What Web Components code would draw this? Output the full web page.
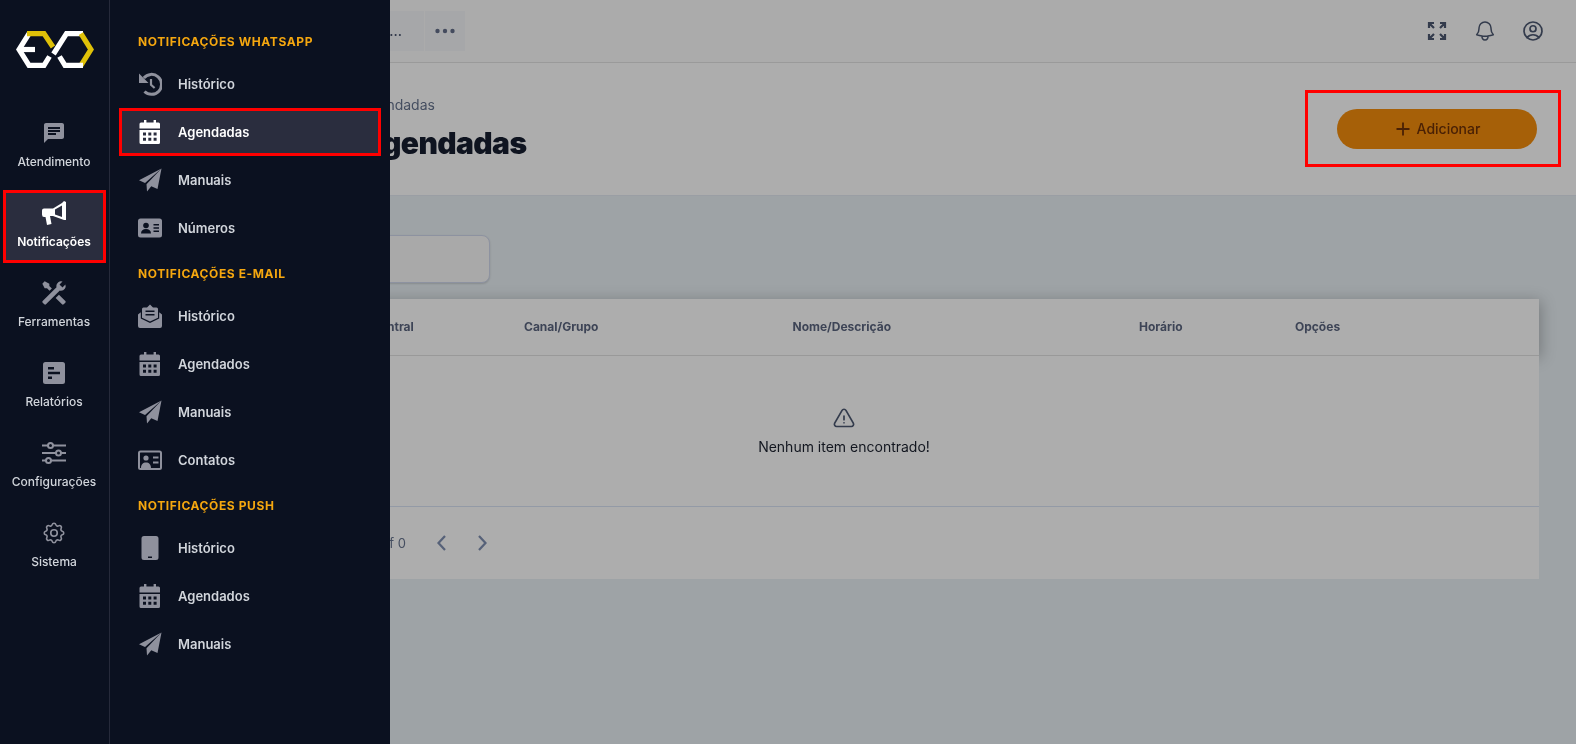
<!DOCTYPE html>
<html lang="pt-BR">
<head>
<meta charset="utf-8">
<title>Agendadas</title>
<style>
  html, body { margin: 0; height: 100%; background: #9ea3a6; font-family: Inter, "Noto Sans", sans-serif; overflow: hidden; }
</style>
</head>
<body>
<app-shell>
  <side-drawer slot="drawer"></side-drawer>
  <top-bar></top-bar>
  <page-header crumb="Agendadas" heading="Agendadas"></page-header>
  <schedule-table></schedule-table>
</app-shell>

<script>
// icones inline, todos em viewBox 24
const BG = '#0b1120';
const ICONS = {
  chat: '<path fill="currentColor" d="M20 2H4c-1.1 0-1.99.9-1.99 2L2 22l4-4h14c1.1 0 2-.9 2-2V4c0-1.1-.9-2-2-2zM6 9h12v2H6V9zm8 5H6v-2h8v2zm4-6H6V6h12v2z"/>',
  bullhorn: '<path fill="currentColor" fill-rule="evenodd" d="M0 9.500Q0 7.500 2 7.500H11L20 2 22 0 24 1V19L22 19 11 15H8L9.500 23 5 24 3.500 16H2Q0 16 0 13.500zM13 8.500V13.500L20 16V4.500z"/>',
  tools: '<g transform="matrix(-1 0 0 1 24 0)"><path fill="currentColor" d="M21.71 20.29L20.29 21.71A1 1 0 0 1 18.88 21.71L7 9.85A3.81 3.81 0 0 1 6 10A4 4 0 0 1 2.22 4.7L4.76 7.24L5.29 6.71L6.71 5.29L7.24 4.76L4.7 2.22A4 4 0 0 1 10 6A3.81 3.81 0 0 1 9.85 7L21.71 18.88A1 1 0 0 1 21.71 20.29M2.29 18.88A1 1 0 0 0 2.29 20.29L3.71 21.71A1 1 0 0 0 5.12 21.71L10.59 16.25L7.76 13.41M20 2L16 4V6L13.83 8.17L15.83 10.17L18 8H20L22 4Z"/></g>',
  report: '<path fill="currentColor" fill-rule="evenodd" d="M3.5 1h17A2.5 2.5 0 0 1 23 3.500v17a2.500 2.500 0 0 1-2.500 2.500h-17A2.500 2.500 0 0 1 1 20.500v-17A2.500 2.500 0 0 1 3.500 1zM6 6v2.400h6V6zM6 10.800v2.400h12v-2.400zM6 15.600V18h4v-2.400z"/>',
  sliders: '<g fill="none" stroke="currentColor" stroke-width="2"><path d="M0 4.500h6M11 4.500h13M0 12h14M19 12h5M0 19.500h4M9 19.500h15"/><circle cx="8.500" cy="4.500" r="2.500"/><circle cx="16.500" cy="12" r="2.500"/><circle cx="6.500" cy="19.500" r="2.500"/></g>',
  gear: '<g fill="none" stroke="currentColor" stroke-width="1.500"><path d="M10.325 4.317c.426-1.756 2.924-1.756 3.350 0a1.724 1.724 0 002.573 1.066c1.543-.94 3.310.826 2.370 2.370a1.724 1.724 0 001.065 2.572c1.756.426 1.756 2.924 0 3.350a1.724 1.724 0 00-1.066 2.573c.94 1.543-.826 3.310-2.370 2.370a1.724 1.724 0 00-2.572 1.065c-.426 1.756-2.924 1.756-3.350 0a1.724 1.724 0 00-2.573-1.066c-1.543.94-3.310-.826-2.370-2.370a1.724 1.724 0 00-1.065-2.572c-1.756-.426-1.756-2.924 0-3.350a1.724 1.724 0 001.066-2.573c-.94-1.543.826-3.310 2.370-2.370.996.608 2.296.07 2.572-1.065z"/><circle cx="12" cy="12" r="3"/></g>',
  history: '<path fill="none" stroke="currentColor" stroke-width="3" d="M5.800 6A10 10 0 1 1 6.500 19.500"/><path fill="currentColor" d="M1 1.500V11h9.500z"/><path fill="none" stroke="currentColor" stroke-width="2.200" d="M13 7v5.800l3.600 3.200"/>',
  calendar: '<path fill="currentColor" fill-rule="evenodd" d="M6 0h2.400v2.500h7.200V0H18v2.500h2.500A1.500 1.500 0 0 1 22 4v4.600H1.500V4A1.500 1.500 0 0 1 3 2.500H6zM1.500 10H22v12.500a1.500 1.500 0 0 1-1.500 1.500H3a1.500 1.500 0 0 1-1.500-1.500zM5 12.500v3h3v-3zM10.300 12.500v3h3v-3zM15.600 12.500v3h3v-3zM5 17.800v3h3v-3zM10.300 17.800v3h3v-3zM15.600 17.800v3h3v-3z"/>',
  plane: '<path fill="currentColor" d="M23.500 .5 1 12.300 7 15zM23.500 .5 8.500 16.300 9 23.500 13.300 18.300 19.500 21z"/>',
  idcard: '<rect x="0" y="2.500" width="24" height="19" rx="2.500" fill="currentColor"/><circle cx="8" cy="9.500" r="2.800" fill="' + BG + '"/><path fill="' + BG + '" d="M3 17.500c0-3 2-4.500 5-4.500s5 1.500 5 4.500zM15.500 8h5.500v1.500h-5.500zM15.500 11.300h5.500v1.500h-5.500zM15.500 14.600h5.500v1.500h-5.500z"/>',
  mailopen: '<path fill="currentColor" fill-rule="evenodd" d="M9 3.500 12 .5 15 3.500h3.500A1.500 1.500 0 0 1 20 5v8.800L12 17.500 4 13.800V5a1.500 1.500 0 0 1 1.500-1.500zM7.500 6.500V8h9V6.500zM7.500 10v1.500h9V10z"/><path fill="currentColor" d="M0 10.500 2.800 8.200V14.500L12 19 21.200 14.500V8.200L24 10.500V22a2 2 0 0 1-2 2H2a2 2 0 0 1-2-2z"/>',
  contact: '<rect x="1" y="3.500" width="22" height="17.500" rx="1.500" fill="none" stroke="currentColor" stroke-width="2"/><circle cx="8" cy="10" r="2.600" fill="currentColor"/><path fill="currentColor" d="M3 20c0-3.500 2-5.500 5-5.500s5 2 5 5.500zM15 8.500h5.500v2H15zM15 13.500h5.500v2H15z"/>',
  phone: '<path fill="currentColor" fill-rule="evenodd" d="M6 0h12A2.500 2.500 0 0 1 20.500 2.500v19a2.500 2.500 0 0 1-2.500 2.500H6A2.500 2.500 0 0 1 3.500 21.500v-19A2.500 2.500 0 0 1 6 0zM10 20.500V22h4v-1.500z"/>'
};

const HERO = (d, w = 1.5) => `<path fill="none" stroke="currentColor" stroke-width="${w}" stroke-linecap="round" stroke-linejoin="round" d="${d}"/>`;
// alguns icones tem desenho menor que a caixa, entao escala um pouco
const RAIL_SIZE = { gear: 26, tools: 28 };

function svg(name, size = 24) {
  return `<svg width="${size}" height="${size}" viewBox="0 0 24 24" aria-hidden="true">${ICONS[name]}</svg>`;
}

class AppShell extends HTMLElement {
  constructor() {
    super();
    this.attachShadow({ mode: 'open' });
    this.shadowRoot.innerHTML = `
      <style>
        :host { display: block; height: 744px; padding-left: 312px; box-sizing: border-box; background: #9ea3a6; overflow: hidden; }
        .drawer { position: fixed; left: 0; top: 0; bottom: 0; z-index: 10; will-change: transform; }
        .main { will-change: transform; }
      </style>
      <div class="drawer"><slot name="drawer"></slot></div>
      <div class="main"><slot></slot></div>`;
  }
}

class SideDrawer extends HTMLElement {
  constructor() {
    super();
    this.attachShadow({ mode: 'open' });
    this.shadowRoot.innerHTML = `
      <style>
        :host { display: flex; height: 744px; background: ${BG}; }
        .rail { width: 109px; border-right: 1px solid #262a3a; display: flex; flex-direction: column; align-items: center; position: relative; box-sizing: content-box; }
        .logo { margin-top: 31px; margin-bottom: 45px; height: 37px; width: 78px; display: block; }
        .panel { width: 280px; box-sizing: border-box; padding: 0 12px; }
      </style>
      <div class="rail">
        <svg class="logo" viewBox="15 31 78 37" fill="none" stroke-width="5.200" stroke-linejoin="miter">
          <path stroke="#fff" d="M28 33.600 18 49.500 28 65.400H43L48.500 56.500"/>
          <path stroke="#fff" d="M18 49.500H34"/>
          <path stroke="#dfc108" d="M26 33.600H43L52 47"/>
          <path stroke="#fff" d="M52.500 54 65.500 33.600H82"/>
          <path stroke="#dfc108" d="M80 33.600 90 49.500 80 65.400"/>
          <path stroke="#fff" d="M58.500 56.500 64 65.400H82"/>
        </svg>
        <rail-item icon="chat">Atendimento</rail-item>
        <rail-item icon="bullhorn" active>Notificações</rail-item>
        <rail-item icon="tools">Ferramentas</rail-item>
        <rail-item icon="report">Relatórios</rail-item>
        <rail-item icon="sliders">Configurações</rail-item>
        <rail-item icon="gear">Sistema</rail-item>
      </div>
      <div class="panel">
        <nav-title first>Notificações WhatsApp</nav-title>
        <nav-item icon="history">Histórico</nav-item>
        <nav-item icon="calendar" active>Agendadas</nav-item>
        <nav-item icon="plane">Manuais</nav-item>
        <nav-item icon="idcard">Números</nav-item>
        <nav-title>Notificações E-mail</nav-title>
        <nav-item icon="mailopen">Histórico</nav-item>
        <nav-item icon="calendar">Agendados</nav-item>
        <nav-item icon="plane">Manuais</nav-item>
        <nav-item icon="contact">Contatos</nav-item>
        <nav-title>Notificações Push</nav-title>
        <nav-item icon="phone">Histórico</nav-item>
        <nav-item icon="calendar">Agendados</nav-item>
        <nav-item icon="plane">Manuais</nav-item>
      </div>`;
  }
}

class RailItem extends HTMLElement {
  constructor() {
    super();
    this.attachShadow({ mode: 'open' });
    const active = this.hasAttribute('active');
    const icon = this.getAttribute('icon');
    this.shadowRoot.innerHTML = `
      <style>
        :host { display: flex; flex-direction: column; align-items: center; width: 97px; height: 67px; margin: 0 1px 13px 0; box-sizing: border-box; padding-top: 8px;
          color: ${active ? '#fff' : '#8f919d'}; ${active ? 'background:#2a2d3e; outline:3px solid #f00;' : ''} }
        .ico { height: 24px; display: flex; align-items: center; justify-content: center; }
        svg { display: block; flex: none; }
        .label { margin-top: 8px; font: ${active ? 600 : 500} 12px/17px Inter, sans-serif; color: ${active ? '#fff' : '#d1d5db'}; white-space: nowrap; }
      </style>
      <div class="ico">${svg(icon, RAIL_SIZE[icon] || 24)}</div>
      <span class="label"><slot></slot></span>`;
  }
}

class NavTitle extends HTMLElement {
  constructor() {
    super();
    this.attachShadow({ mode: 'open' });
    this.shadowRoot.innerHTML = `
      <style>
        :host { display: block; box-sizing: border-box; height: 24px; margin: ${this.hasAttribute('first') ? '30px' : '13px'} 0 9px; padding-left: 16px;
          font: 700 12px/24px Inter, sans-serif; letter-spacing: .6px; text-transform: uppercase; color: #f5a70f; white-space: nowrap; }
      </style><slot></slot>`;
  }
}

class NavItem extends HTMLElement {
  constructor() {
    super();
    this.attachShadow({ mode: 'open' });
    const active = this.hasAttribute('active');
    this.shadowRoot.innerHTML = `
      <style>
        :host { display: flex; align-items: center; height: 42px; margin: 6px 0; padding-left: 16px; gap: 16px; box-sizing: border-box;
          color: ${active ? '#fff' : '#8f919d'}; ${active ? 'background:#2a2d3e; outline:3px solid #f00;' : ''} }
        svg { display: block; flex: none; }
        .label { font: 600 13px/18px Inter, sans-serif; color: ${active ? '#fff' : '#d1d5db'}; }
      </style>
      ${svg(this.getAttribute('icon'))}
      <span class="label"><slot></slot></span>`;
  }
}

class TopBar extends HTMLElement {
  constructor() {
    super();
    this.attachShadow({ mode: 'open' });
    this.shadowRoot.innerHTML = `
      <style>
        :host { display: flex; align-items: center; box-sizing: border-box; height: 63px; padding: 0 31px 1px 33px; background: #ababab; border-bottom: 1px solid #9a9a9a; color: #333b4c; }
        .tab { height: 40px; background: #a6a7a9; display: flex; align-items: center; justify-content: flex-end; margin-right: 1px; box-sizing: border-box; }
        .name { width: 79px; padding-right: 22px; font: 500 14px/40px Inter, sans-serif; color: #333b4c; }
        .more { width: 40px; justify-content: center; color: #444b5e; }
        .icons { margin-left: auto; display: flex; gap: 24px; }
        svg { display: block; }
      </style>
      <div class="tab name">...</div>
      <div class="tab more"><svg width="20" height="6" viewBox="0 0 20 6"><g fill="currentColor"><circle cx="2.500" cy="3" r="2.200"/><circle cx="10" cy="3" r="2.200"/><circle cx="17.500" cy="3" r="2.200"/></g></svg></div>
      <div class="icons">
        <svg width="24" height="24" viewBox="0 0 24 24"><g fill="none" stroke="currentColor" stroke-width="2.200"><path d="M9 4H4v5M4 4l5 5M15 4h5v5M20 4l-5 5M4 15v5h5M4 20l5-5M20 15v5h-5M20 20l-5-5"/></g></svg>
        <svg width="24" height="24" viewBox="0 0 24 24">${HERO('M14.857 17.082a23.848 23.848 0 005.454-1.31A8.967 8.967 0 0118 9.750v-.7V9A6 6 0 006 9v.750a8.967 8.967 0 01-2.312 6.022c1.733.64 3.560 1.085 5.455 1.310m5.714 0a24.255 24.255 0 01-5.714 0m5.714 0a3 3 0 11-5.714 0')}</svg>
        <svg width="24" height="24" viewBox="0 0 24 24">${HERO('M17.982 18.725A7.488 7.488 0 0012 15.750a7.488 7.488 0 00-5.982 2.975m11.963 0a9 9 0 10-11.963 0m11.963 0A8.966 8.966 0 0112 21a8.966 8.966 0 01-5.982-2.275M15 9.750a3 3 0 11-6 0 3 3 0 016 0z', 1.7)}</svg>
      </div>`;
  }
}

class PageHeader extends HTMLElement {
  constructor() {
    super();
    this.attachShadow({ mode: 'open' });
    this.shadowRoot.innerHTML = `
      <style>
        :host { display: flex; justify-content: space-between; align-items: flex-start; box-sizing: border-box; height: 133px; padding: 30px 18px 0 48px; background: #adadad; border-bottom: 1px solid #9a9ea4; }
        .crumb { font: 400 14px/20px Inter, sans-serif; color: #454e60; margin-top: 2px; }
        h1 { margin: 10px 0 0; font: 900 30px/36px Inter, sans-serif; letter-spacing: -.6px; color: #0f1420; }
        .action { outline: 3px solid #f00; padding: 16px 21px 15px 29px; }
        button { display: flex; align-items: center; justify-content: center; gap: 5px; width: 200px; height: 40px; border: 0; border-radius: 20px; background: #a66008; color: #4a2105; font: 500 14px/20px Inter, sans-serif; padding: 0; }
        svg { display: block; }
      </style>
      <div>
        <div class="crumb">${this.getAttribute('crumb')}</div>
        <h1>${this.getAttribute('heading')}</h1>
      </div>
      <div class="action">
        <button><svg width="18" height="18" viewBox="0 0 18 18"><path stroke="currentColor" stroke-width="1.800" d="M9 2.500v13M2.500 9h13"/></svg>Adicionar</button>
      </div>`;
  }
}

class ScheduleTable extends HTMLElement {
  constructor() {
    super();
    this.attachShadow({ mode: 'open' });
    this.shadowRoot.innerHTML = `
      <style>
        :host { display: block; padding: 39px 37px 0; }
        .search { width: 125px; height: 48px; margin-left: 16px; box-sizing: border-box; background: #a9a9a9; border: 1px solid #8d92a0; border-radius: 8px; box-shadow: 0 1px 2px rgba(0,0,0,.15); }
        .card { margin-top: 16px; background: #adadad; height: 280px; display: flex; flex-direction: column; }
        .head { display: grid; grid-template-columns: 159px 268.5px 346.5px 156px 1fr; align-items: center; height: 57px; box-sizing: border-box; padding-left: 16px; border-bottom: 1px solid #999; box-shadow: 2px 2px 14px rgba(0,0,0,.25); font: 700 12px/16px Inter, sans-serif; color: #3d4456; background: #adadad; }
        .head span:first-child { margin-left: 6px; }
        .empty { position: relative; height: 150px; box-sizing: border-box; background: #adadad; display: flex; flex-direction: column; align-items: center; justify-content: center; gap: 6px; padding: 2px 200px 0 0; color: #333b4c; }
        .empty span { font: 400 14px/20px Inter, sans-serif; color: #12161f; }
        .foot { position: relative; flex: 1; background: #adadad; display: flex; align-items: center; padding-left: 16px; border-top: 1px solid #939aa6; color: #566178; }
        .count { width: 41px; text-align: right; font: 400 13px/18px Inter, sans-serif; color: #454e60; white-space: nowrap; }
        .pager { margin-left: 24px; display: flex; gap: 16px; }
        svg { display: block; }
      </style>
      <div class="search"></div>
      <div class="card">
        <div class="head"><span>Central</span><span>Canal/Grupo</span><span>Nome/Descrição</span><span>Horário</span><span>Opções</span></div>
        <div class="empty">
          <svg width="24" height="24" viewBox="0 0 24 24">${HERO('M12 9v3.750m-9.303 3.376c-.866 1.500.217 3.374 1.948 3.374h14.710c1.730 0 2.813-1.874 1.948-3.374L13.949 3.378c-.866-1.500-3.032-1.500-3.898 0L2.697 16.126zM12 15.750h.007v.008H12v-.008z', 1.7)}</svg>
          <span>Nenhum item encontrado!</span>
        </div>
        <div class="foot">
          <span class="count">0 of 0</span>
          <div class="pager">
            <svg width="24" height="24" viewBox="0 0 24 24"><path fill="none" stroke="currentColor" stroke-width="2.200" d="M15 5l-6.500 7 6.500 7"/></svg>
            <svg width="24" height="24" viewBox="0 0 24 24"><path fill="none" stroke="currentColor" stroke-width="2.200" d="M9 5l6.500 7L9 19"/></svg>
          </div>
        </div>
      </div>`;
  }
}

customElements.define('app-shell', AppShell);
customElements.define('rail-item', RailItem);
customElements.define('nav-title', NavTitle);
customElements.define('nav-item', NavItem);
customElements.define('side-drawer', SideDrawer);
customElements.define('top-bar', TopBar);
customElements.define('page-header', PageHeader);
customElements.define('schedule-table', ScheduleTable);
</script>
</body>
</html>
